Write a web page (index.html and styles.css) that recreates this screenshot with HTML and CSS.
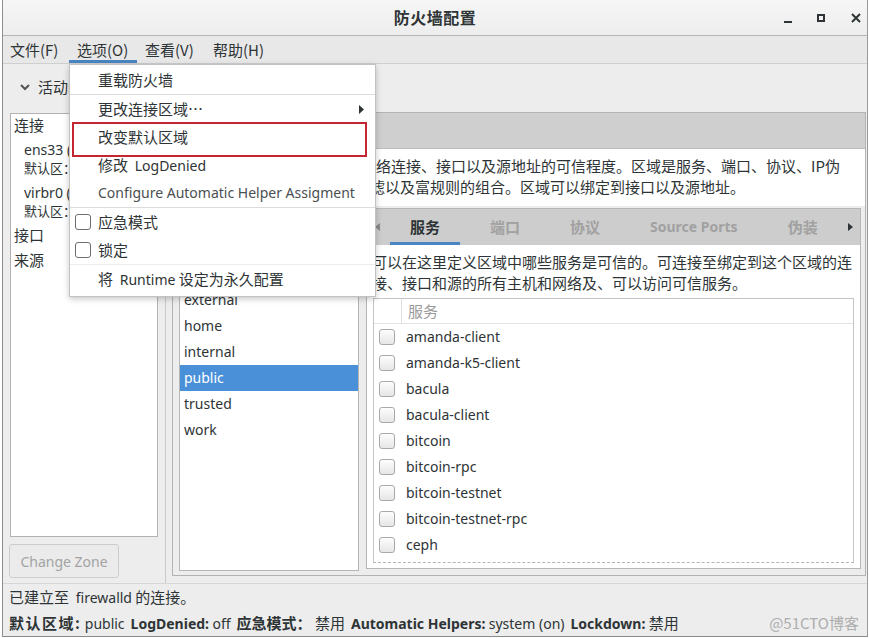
FILE: index.html
```html
<!DOCTYPE html>
<html lang="zh-CN">
<head>
<meta charset="utf-8">
<title>防火墙配置</title>
<link rel="stylesheet" href="styles.css">
</head>
<body>
<div class="window">
  <header class="titlebar">
    <div></div>
    <div class="title">防火墙配置</div>
    <div class="controls">
      <svg class="ctl" width="12" height="12" viewBox="0 0 12 12"><rect x="2" y="9" width="8" height="2" fill="#2e3436"/></svg>
      <svg class="ctl ctl-max" width="12" height="12" viewBox="0 0 12 12"><rect x="3" y="3" width="6" height="6" fill="none" stroke="#2e3436" stroke-width="2"/></svg>
      <svg class="ctl ctl-close" width="12" height="12" viewBox="0 0 12 12"><path d="M2 2 L10 10 M10 2 L2 10" stroke="#2e3436" stroke-width="2" fill="none"/></svg>
    </div>
  </header>

  <nav class="menubar">
    <span class="mi mi-first">文件(F)</span>
    <span class="mi active">选项(O)</span>
    <span class="mi">查看(V)</span>
    <span class="mi">帮助(H)</span>
  </nav>

  <div class="main">
    <aside class="leftpane">
      <div class="expander">
        <svg width="10" height="7" viewBox="0 0 10 7"><path d="M1 1 L5 5 L9 1" fill="none" stroke="#555" stroke-width="2"/></svg>
        <span>活动的绑定</span>
      </div>
      <div class="bindings">
        <div class="b-head">连接</div>
        <div class="b-item first">
          <div class="b-name en">ens33 (public)</div>
          <div class="b-sub">默认区：public</div>
        </div>
        <div class="b-item second">
          <div class="b-name en">virbr0 (public)</div>
          <div class="b-sub">默认区：public</div>
        </div>
        <div class="b-head b-iface">接口</div>
        <div class="b-head b-src">来源</div>
      </div>
      <button class="btn en" disabled>Change Zone</button>
    </aside>

    <div class="pane-sep"></div>

    <section class="rightpane">
      <div class="notebook">
        <div class="nb-tabs"></div>
        <div class="nb-page">
          <div class="desc">
            <div class="line"><span class="pad1"></span>络连接、接口以及源地址的可信程度。区域是服务、端口、协议、IP伪</div>
            <div class="line"><span class="pad2"></span>滤以及富规则的组合。区域可以绑定到接口以及源地址。</div>
          </div>
          <div class="cols">
            <ul class="zones en">
              <li>block</li>
              <li>dmz</li>
              <li>drop</li>
              <li>external</li>
              <li>home</li>
              <li>internal</li>
              <li class="sel">public</li>
              <li>trusted</li>
              <li>work</li>
            </ul>
            <div class="svc-nb">
              <div class="svc-tabs">
                <span class="arrow arrow-left"><svg width="5" height="8" viewBox="0 0 5 8"><path d="M5 0 L0 4 L5 8 Z" fill="#8a8a8a"/></svg></span>
                <span class="tab active">服务</span>
                <span class="tab">端口</span>
                <span class="tab">协议</span>
                <span class="tab en">Source Ports</span>
                <span class="tab">伪装</span>
                <span class="arrow arrow-right"><svg width="5" height="8" viewBox="0 0 5 8"><path d="M0 0 L5 4 L0 8 Z" fill="#2e3436"/></svg></span>
              </div>
              <div class="svc-page">
                <div class="desc svc-desc">
                  <div class="line">可以在这里定义区域中哪些服务是可信的。可连接至绑定到这个区域的连</div>
                  <div class="line">接、接口和源的所有主机和网络及、可以访问可信服务。</div>
                </div>
                <div class="svc-list">
                  <div class="svc-header"><span class="h-check"></span><span class="h-name">服务</span></div>
                  <div class="svc-row"><span class="cb"></span><span class="en">amanda-client</span></div>
                  <div class="svc-row"><span class="cb"></span><span class="en">amanda-k5-client</span></div>
                  <div class="svc-row"><span class="cb"></span><span class="en">bacula</span></div>
                  <div class="svc-row"><span class="cb"></span><span class="en">bacula-client</span></div>
                  <div class="svc-row"><span class="cb"></span><span class="en">bitcoin</span></div>
                  <div class="svc-row"><span class="cb"></span><span class="en">bitcoin-rpc</span></div>
                  <div class="svc-row"><span class="cb"></span><span class="en">bitcoin-testnet</span></div>
                  <div class="svc-row"><span class="cb"></span><span class="en">bitcoin-testnet-rpc</span></div>
                  <div class="svc-row"><span class="cb"></span><span class="en">ceph</span></div>
                </div>
              </div>
            </div>
          </div>
        </div>
      </div>
    </section>
  </div>

  <footer class="status">
    <div class="st-line">已建立至&nbsp; <span class="en">firewalld</span> 的连接。</div>
    <div class="st-line st-info">
      <span class="sg"><b class="k-wide">默认区域:</b> <span class="en">public</span></span>
      <span class="sg"><b class="en">LogDenied:</b> <span class="en">off</span></span>
      <span class="sg"><b>应急模式：</b> 禁用</span>
      <span class="sg"><b class="en">Automatic Helpers:</b> <span class="en">system (on)</span></span>
      <span class="sg"><b class="en">Lockdown:</b> 禁用</span>
      <span class="watermark">@51CTO博客</span>
    </div>
  </footer>

  <div class="dropdown">
    <div class="dd-item">重载防火墙</div>
    <div class="dd-sep"></div>
    <div class="dd-item dd-sub"><span>更改连接区域⋯</span><svg class="sub-arrow" width="5" height="9" viewBox="0 0 5 9"><path d="M0 0 L5 4.5 L0 9 Z" fill="#2e3436"/></svg></div>
    <div class="dd-item marked">改变默认区域</div>
    <div class="dd-item">修改&nbsp; <span class="en">LogDenied</span></div>
    <div class="dd-item en dim">Configure Automatic Helper Assigment</div>
    <div class="dd-sep"></div>
    <div class="dd-item dd-check"><span class="mcb"></span>应急模式</div>
    <div class="dd-item dd-check"><span class="mcb"></span>锁定</div>
    <div class="dd-sep light"></div>
    <div class="dd-item">将&nbsp; <span class="en">Runtime</span> 设定为永久配置</div>
  </div>
</div>
</body>
</html>
```

FILE: styles.css
```css
* { box-sizing: border-box; margin: 0; padding: 0; }
html, body { width: 869px; height: 638px; overflow: hidden; background: #ffffff; }
body {
  font-family: "Noto Sans CJK SC", "Noto Sans", sans-serif;
  font-size: 15px;
  line-height: 20px;
  color: #2e3436;
}
.en { font-family: "Noto Sans", "Noto Sans CJK SC", sans-serif; font-size: 14px; }

.window {
  position: relative;
  margin-left: 2px;
  width: 866px;
  height: 637px;
  border-left: 1px solid #8e8e8e;
  border-right: 1px solid #9a9a9a;
  border-bottom: 1px solid #8a8a8a;
  background: #ededed;
  display: flex;
  flex-direction: column;
}

/* title bar */
.titlebar {
  height: 36px;
  flex: none;
  border-bottom: 1px solid #b5b5b5;
  background: linear-gradient(#f6f6f6, #ededed);
  display: grid;
  grid-template-columns: 1fr auto 1fr;
  align-items: center;
}
.title { font-weight: bold; font-size: 16px; line-height: 35px; letter-spacing: 0.5px; }
.controls { justify-self: end; display: flex; align-items: center; padding-right: 5px; }
.ctl { display: block; }
.ctl-max { margin-left: 21px; }
.ctl-close { margin-left: 23px; }

/* menu bar */
.menubar {
  height: 28px;
  flex: none;
  border-bottom: 1px solid #cfcfcf;
  background: #e8e8e8;
  display: flex;
}
.mi { width: 68px; padding-left: 8px; line-height: 27px; white-space: nowrap; }
.mi-first { width: 66px; padding-left: 7px; }
.mi.active { box-shadow: inset 0 -3px 0 #4a86c4; }

/* main */
.main { height: 519px; flex: none; display: flex; }

.leftpane { width: 162px; flex: none; padding: 11px 0 0 7px; display: flex; flex-direction: column; }
.expander { height: 24px; display: flex; align-items: center; padding-left: 10px; white-space: nowrap; }
.expander svg { margin-right: 8px; }
.bindings {
  margin-top: 14px;
  width: 148px;
  height: 424px;
  background: #fff;
  border: 1px solid #b2b2b2;
  padding-left: 3px;
  overflow: hidden;
  white-space: nowrap;
}
.b-head { line-height: 22px; }
.b-item { padding-left: 10px; }
.b-item.first { margin-top: 4px; }
.b-item.second { margin-top: 7px; }
.b-name { line-height: 20px; }
.b-sub { font-size: 13px; line-height: 16px; }
.b-iface { margin-top: 4px; line-height: 24px; }
.b-src { line-height: 26px; }

.btn {
  margin-top: 7px;
  margin-left: -1px;
  width: 110px;
  height: 34px;
  color: #a3a3a3;
  background: #ebebeb;
  border: 1px solid #cdcdcd;
  border-radius: 3px;
}

.pane-sep { width: 1px; flex: none; background: #c9c9c9; }

.rightpane { flex: 1; padding: 48px 0 0 6px; }
.notebook {
  width: 694px;
  height: 464px;
  border: 1px solid #b3b3b3;
  background: #fff;
  display: flex;
  flex-direction: column;
}
.nb-tabs {
  height: 36px;
  flex: none;
  background: #cfcfcf;
  border-bottom: 1px solid #bcbcbc;
}
.nb-page { flex: 1; display: flex; flex-direction: column; }

.desc { padding: 6px 0 0 4px; white-space: nowrap; overflow: hidden; }
.desc .line { line-height: 21px; }
.pad1 { display: inline-block; width: 199px; }
.pad2 { display: inline-block; width: 193px; }

.cols {
  margin-top: 9px;
  flex: 1;
  background: #ededed;
  display: flex;
  align-items: flex-start;
  padding: 0 4px 0 6px;
}
.zones {
  list-style: none;
  width: 180px;
  height: 365px;
  background: #fff;
  border: 1px solid #b6b6b6;
  padding-top: 2px;
  overflow: hidden;
}
.zones li { line-height: 26px; height: 26px; padding-left: 4px; }
.zones li.sel { background: #4a90d9; color: #fff; }

.svc-nb {
  margin-top: 2px;
  margin-left: 7px;
  width: 495px;
  height: 361px;
  background: #fff;
  border: 1px solid #b6b6b6;
  display: flex;
  flex-direction: column;
}
.svc-tabs {
  height: 36px;
  flex: none;
  background: #cdcdcd;
  display: flex;
  align-items: stretch;
  gap: 10px;
  overflow: hidden;
}
.arrow { display: flex; align-items: center; flex: none; }
.arrow-left { width: 13px; padding-left: 8px; }
.arrow-right { margin-left: auto; width: 12px; }
.tab {
  flex: none;
  padding: 0 20px;
  line-height: 36px;
  font-weight: bold;
  color: #a1a1a1;
  white-space: nowrap;
}
.tab.active { color: #2e3436; box-shadow: inset 0 -3px 0 #4a86c4; }

.svc-page { flex: 1; padding: 0 6px 0 6px; }
.svc-desc { padding-left: 0; margin-left: -1px; }
.svc-list {
  margin-top: 5px;
  height: 265px;
  border: 1px solid #c4c4c4;
  border-bottom: 1px dashed #b4b4b4;
  overflow: hidden;
}
.svc-header { height: 25px; display: flex; border-bottom: 1px solid #e3e3e3; }
.h-check { width: 28px; border-right: 1px solid #e0e0e0; }
.h-name { padding-left: 6px; line-height: 24px; color: #9a9a9a; }
.svc-row { height: 26px; display: flex; align-items: center; padding-left: 5px; white-space: nowrap; }
.cb {
  width: 16px;
  height: 16px;
  margin-right: 11px;
  border: 1px solid #a9a9a9;
  border-radius: 3px;
  background: linear-gradient(#fdfdfd, #e6e6e6);
}

/* status bar */
.status { flex: 1; border-top: 1px solid #d6d6d6; padding-left: 6px; }
.st-line { height: 26px; line-height: 26px; white-space: nowrap; }
.st-info { display: flex; }
.sg { margin-right: 6px; }
.sg b { font-weight: bold; }
.k-wide { letter-spacing: 1.5px; }
.watermark { margin-left: auto; padding-right: 8px; color: #aeaeae; }

/* dropdown menu (overlay) */
.dropdown {
  position: absolute;
  left: 66px;
  top: 64px;
  width: 307px;
  height: 233px;
  background: #fff;
  border: 1px solid #c2c2c2;
  box-shadow: 0 2px 6px rgba(0, 0, 0, 0.22);
  padding-top: 1px;
}
.dd-item { position: relative; height: 28px; line-height: 28px; padding-left: 28px; white-space: nowrap; }
.dd-item.dim { color: #4a4f51; }
.dd-sep { height: 1px; background: #dcdcdc; }
.dd-sep.light { background: #ececec; }
.dd-sub { display: flex; align-items: center; }
.sub-arrow { margin-left: auto; margin-right: 11px; }
.marked::after {
  content: "";
  position: absolute;
  left: 2px;
  top: -1px;
  width: 291px;
  height: 31px;
  border: 2px solid #c42531;
}
.dd-check { display: flex; align-items: center; padding-left: 5px; }
.mcb {
  width: 16px;
  height: 16px;
  margin-right: 7px;
  border: 1px solid #6f6f6f;
  border-radius: 3px;
  background: #fff;
}
```
